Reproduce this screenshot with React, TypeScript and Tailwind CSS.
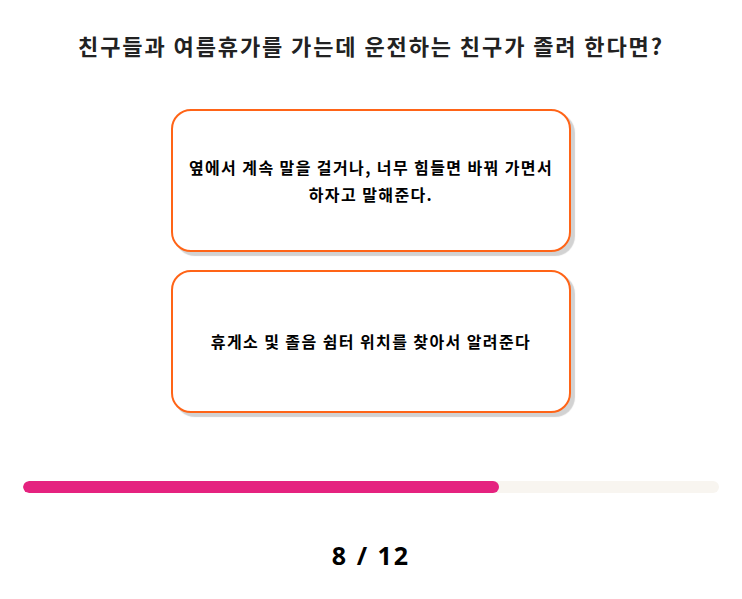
const font = { fontFamily: '"Noto Sans CJK KR", "Noto Sans", sans-serif' };

const answers = [
  "옆에서 계속 말을 걸거나, 너무 힘들면 바꿔 가면서 하자고 말해준다.",
  "휴게소 및 졸음 쉼터 위치를 찾아서 알려준다",
];

export default function App() {
  const current = 8;
  const total = 12;
  return (
    <div className="w-[742px] h-[599px] bg-white flex flex-col items-center" style={font}>
      <h1 className="mt-[29px] text-[22px] leading-[32px] font-bold tracking-[1.9px] text-[#222]">
        친구들과 여름휴가를 가는데 운전하는 친구가 졸려 한다면?
      </h1>
      <div className="mt-[48px] flex flex-col gap-[18px]">
        {answers.map((a) => (
          <button
            key={a}
            className="w-[400px] h-[143px] rounded-[20px] border-2 border-[#ff6417] bg-white shadow-[4px_4px_1px_#d2d2d2] flex items-center justify-center px-[15px] text-[16px] leading-[27px] font-bold tracking-[1.4px] break-keep text-black"
          >
            {a}
          </button>
        ))}
      </div>
      <div className="mt-[68px] w-[696px] h-[12px] rounded-full bg-[#f8f5f0] overflow-hidden">
        <div className="h-full w-[68.4%] rounded-full bg-[#e5227f]" />
      </div>
      <div
        className="mt-[44px] text-[25px] font-bold tracking-[2px] text-black"
        style={{ fontFamily: '"Noto Sans", sans-serif' }}
      >
        {current} / {total}
      </div>
    </div>
  );
}
